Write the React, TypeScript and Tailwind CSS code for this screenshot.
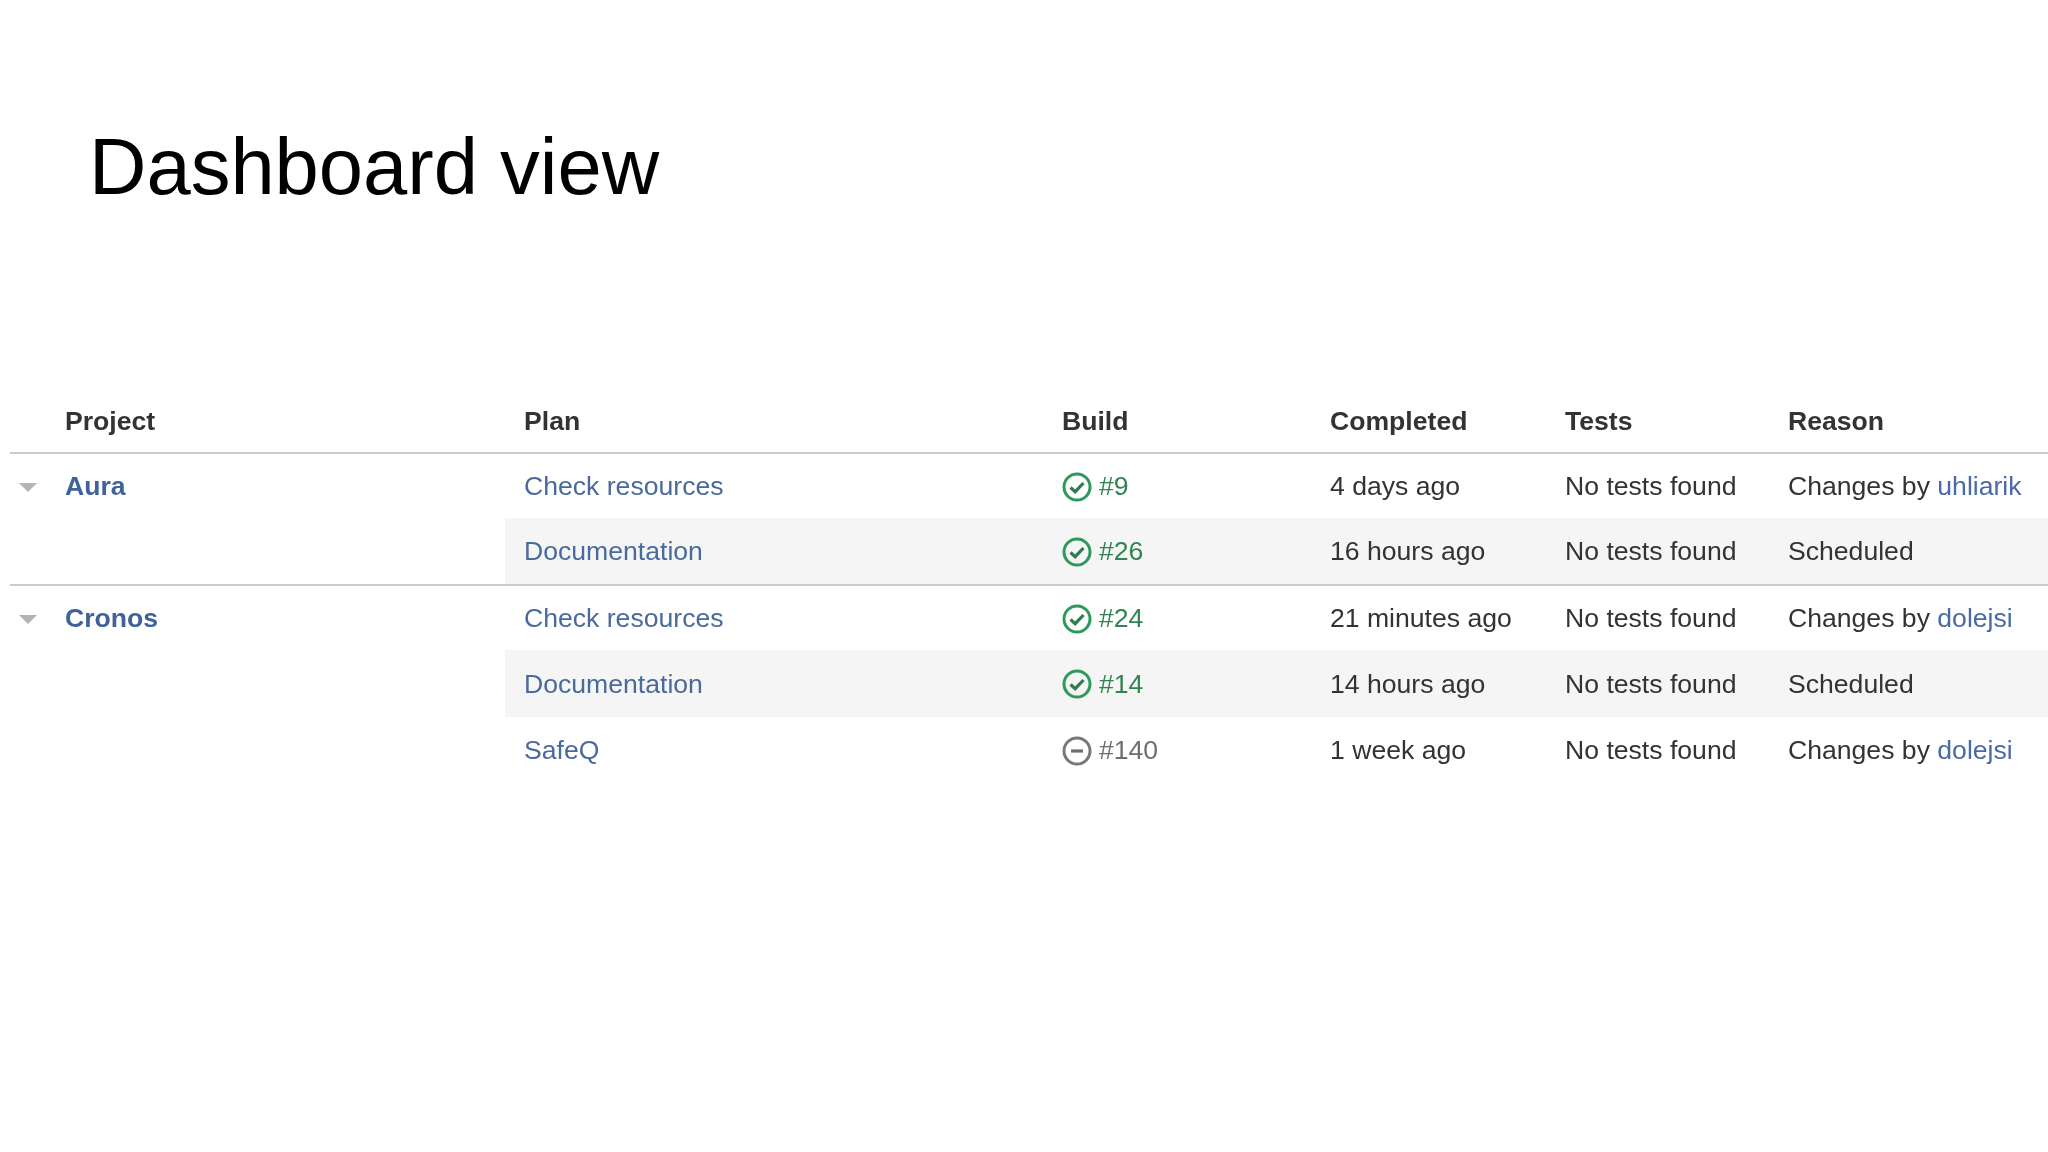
type Row = { plan: string; build: string; ok: boolean; completed: string; height: string; by?: string; reason?: string };
type Project = { name: string; rows: Row[] };

const projects: Project[] = [
  {
    name: "Aura",
    rows: [
      { plan: "Check resources", build: "#9", ok: true, completed: "4 days ago", by: "uhliarik", height: "h-[64px]" },
      { plan: "Documentation", build: "#26", ok: true, completed: "16 hours ago", reason: "Scheduled", height: "h-[68px] border-b-2 border-[#cdcdcf]" },
    ],
  },
  {
    name: "Cronos",
    rows: [
      { plan: "Check resources", build: "#24", ok: true, completed: "21 minutes ago", by: "dolejsi", height: "h-[64px]" },
      { plan: "Documentation", build: "#14", ok: true, completed: "14 hours ago", reason: "Scheduled", height: "h-[67px]" },
      { plan: "SafeQ", build: "#140", ok: false, completed: "1 week ago", by: "dolejsi", height: "h-[66px]" },
    ],
  },
];

function StatusIcon({ ok }: { ok: boolean }) {
  return (
    <svg width="30" height="30" viewBox="0 0 30 30" fill="none" className="shrink-0">
      <circle cx="15" cy="15" r="13" strokeWidth="3" stroke={ok ? "#2b9a5b" : "#77787c"} />
      {ok ? (
        <path d="M8.5 15.5l4.7 4.2L21.5 11" stroke="#2f7d4f" strokeWidth="3.2" />
      ) : (
        <path d="M9 15h12" stroke="#6d6e72" strokeWidth="3.2" />
      )}
    </svg>
  );
}

export default function App() {
  return (
    <div className="min-h-[1152px] bg-white font-['Liberation_Sans',Arial,sans-serif] text-[26.6px] text-[#333333]">
      <h1 className="pl-[89px] pt-[118px] text-[79.5px] leading-[98px] text-black">Dashboard view</h1>

      <div className="ml-[10px] mt-[176px] blur-[0.4px]">
        <div className="grid h-[62px] grid-cols-[495px_557px_268px_235px_223px_1fr] items-center border-b-2 border-[#cdcdcf] font-bold">
          <div className="pl-[55px]">Project</div>
          <div className="pl-[19px]">Plan</div>
          <div>Build</div>
          <div>Completed</div>
          <div>Tests</div>
          <div>Reason</div>
        </div>

        {projects.map((project) => (
          <div key={project.name}>
            {project.rows.map((row, i) => (
              <div key={row.plan} className={`flex items-stretch ${row.height}`}>
                <div className="flex w-[495px] shrink-0 items-center pt-[2px]">
                  {i === 0 && (
                    <>
                      <span className="ml-[9px] h-0 w-0 border-x-[9px] border-t-[9px] border-x-transparent border-t-[#b4b4b6]" />
                      <span className="ml-[28px] font-bold text-[#3f6298]">{project.name}</span>
                    </>
                  )}
                </div>
                <div className={`grid flex-1 grid-cols-[557px_268px_235px_223px_1fr] items-center pt-[2px] ${i % 2 === 1 ? "bg-[#f5f5f6]" : ""}`}>
                  <div className="pl-[19px] text-[#4a6a9c]">{row.plan}</div>
                  <div className={`flex items-center gap-[7px] ${row.ok ? "text-[#2f8450]" : "text-[#6d6e72]"}`}>
                    <StatusIcon ok={row.ok} />
                    {row.build}
                  </div>
                  <div>{row.completed}</div>
                  <div>No tests found</div>
                  <div>
                    {row.by ? (
                      <>
                        Changes by <span className="text-[#4a6aa6]">{row.by}</span>
                      </>
                    ) : (
                      row.reason
                    )}
                  </div>
                </div>
              </div>
            ))}
          </div>
        ))}
      </div>
    </div>
  );
}
